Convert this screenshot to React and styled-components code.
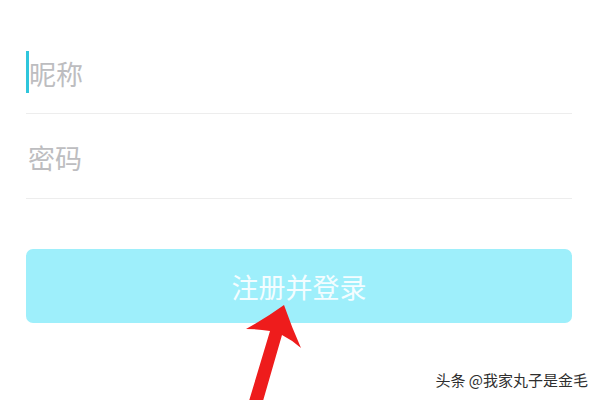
import React from "react";
import styled, { createGlobalStyle } from "styled-components";

const Global = createGlobalStyle`
  html, body { margin: 0; padding: 0; background: #ffffff; }
  body { font-family: "Noto Sans CJK SC", "Noto Sans", sans-serif; }
`;

const Page = styled.div`
  position: relative;
  width: 600px;
  height: 400px;
  overflow: hidden;
  background: #ffffff;
  box-sizing: border-box;
  padding: 29px 28px 0 26px;
  display: flex;
  flex-direction: column;
`;

const Field = styled.div`
  height: 85px;
  box-sizing: border-box;
  border-bottom: 1px solid #ededed;
  display: flex;
  align-items: center;
  padding-top: ${(p) => p.$offset || 0}px;
`;

const Cursor = styled.span`
  width: 3px;
  height: 42px;
  background: #2fc6dc;
  margin-top: -4px;
  flex: none;
`;

const Placeholder = styled.span`
  font-size: 27px;
  line-height: 1;
  color: #bdbdc0;
  margin-left: ${(p) => (p.$withCursor ? 0 : 2)}px;
  margin-top: ${(p) => p.$dy || 0}px;
`;

const Button = styled.div`
  margin-top: 50px;
  height: 74px;
  border-radius: 7px;
  background: #9eeffb;
  display: flex;
  align-items: center;
  justify-content: center;
  color: #f4fdff;
  font-size: 27px;
`;

const ArrowLayer = styled.svg`
  position: absolute;
  left: 0;
  top: 0;
  width: 600px;
  height: 400px;
  pointer-events: none;
`;

const Watermark = styled.div`
  position: absolute;
  right: 12px;
  bottom: 10px;
  font-size: 15px;
  color: #2e2e2e;
  text-shadow: 0 0 2px #ffffff, 0 0 2px #ffffff;
  white-space: nowrap;
`;

export default function App() {
  return (
    <>
      <Global />
      <Page>
        <Field $offset={6}>
          <Cursor />
          <Placeholder $withCursor $dy={-2}>昵称</Placeholder>
        </Field>
        <Field $offset={6}>
          <Placeholder $dy={-4}>密码</Placeholder>
        </Field>
        <Button>注册并登录</Button>
        <ArrowLayer viewBox="0 0 600 400">
          <path
            d="M284,305 Q266,318 246,329 Q258,329 270,331 L249,401 L263,401 L282,335 Q292,340 301,348 Q292,328 284,305 Z"
            fill="#ee1c1c"
          />
        </ArrowLayer>
        <Watermark>头条 @我家丸子是金毛</Watermark>
      </Page>
    </>
  );
}
